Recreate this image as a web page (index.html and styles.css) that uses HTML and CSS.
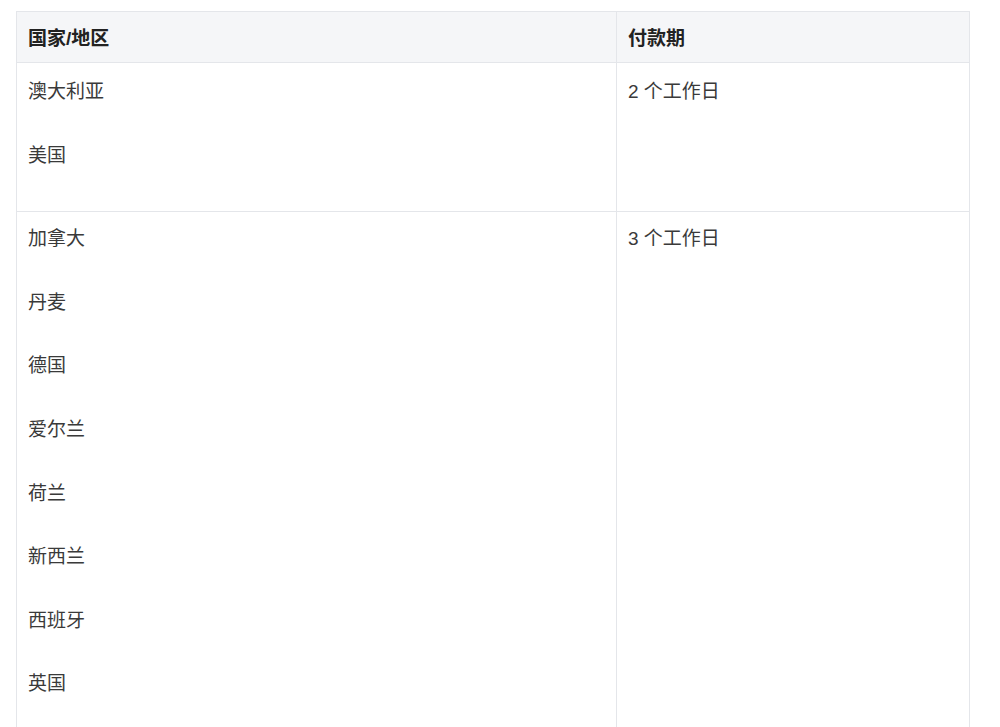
FILE: index.html
```html
<!DOCTYPE html>
<html lang="zh-CN">
<head>
<meta charset="utf-8">
<title>付款期</title>
<link rel="stylesheet" href="styles.css">
</head>
<body>
<div class="wrap">
<table class="pay-table">
  <thead>
    <tr>
      <th class="col-country">国家/地区</th>
      <th class="col-term">付款期</th>
    </tr>
  </thead>
  <tbody>
    <tr class="row-first">
      <td>
        <p>澳大利亚</p>
        <p>美国</p>
      </td>
      <td><p>2 个工作日</p></td>
    </tr>
    <tr>
      <td>
        <p>加拿大</p>
        <p>丹麦</p>
        <p>德国</p>
        <p>爱尔兰</p>
        <p>荷兰</p>
        <p>新西兰</p>
        <p>西班牙</p>
        <p>英国</p>
      </td>
      <td><p>3 个工作日</p></td>
    </tr>
  </tbody>
</table>
</div>
</body>
</html>
```
FILE: styles.css
```css
html, body {
  margin: 0;
  padding: 0;
  background: #ffffff;
}
body {
  font-family: "Liberation Sans", "Noto Sans CJK SC", sans-serif;
  color: #3a3a3a;
  font-size: 19px;
  overflow: hidden;
  height: 727px;
}
.wrap {
  padding: 11px 0 0 16px;
}
.pay-table {
  width: 954px;
  border-collapse: collapse;
  table-layout: fixed;
}
.col-country {
  width: 600px;
}
.pay-table th,
.pay-table td {
  border: 1px solid #e4e6ea;
  text-align: left;
  vertical-align: top;
}
.pay-table th {
  background: #f5f6f8;
  color: #222;
  font-weight: bold;
  height: 51px;
  padding: 4px 11px 0;
  vertical-align: middle;
  line-height: 24px;
  box-sizing: border-box;
}
.pay-table td {
  padding: 13px 11px 8px;
}
.pay-table .row-first td {
  padding: 15px 11px 6px;
}
.pay-table p {
  margin: 0 0 35.6px;
  line-height: 28px;
}
```
